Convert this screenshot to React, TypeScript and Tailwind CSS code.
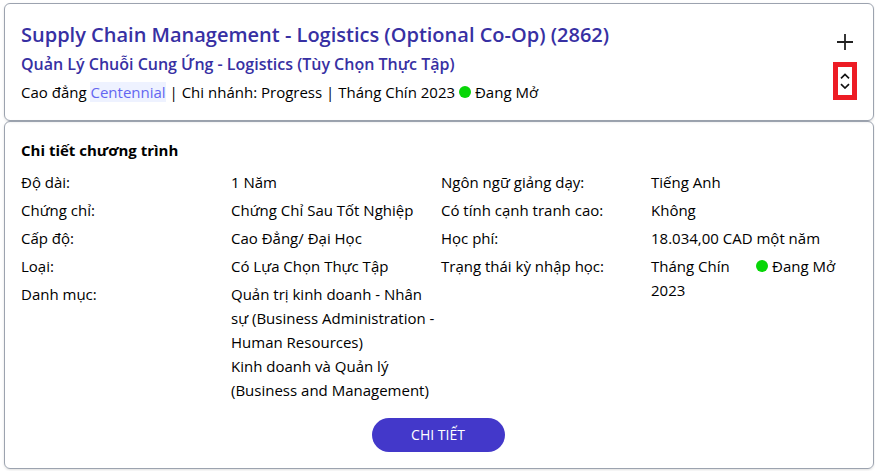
const leftDetails = [
  { label: 'Độ dài:', lines: ['1 Năm'] },
  { label: 'Chứng chỉ:', lines: ['Chứng Chỉ Sau Tốt Nghiệp'] },
  { label: 'Cấp độ:', lines: ['Cao Đẳng/ Đại Học'] },
  { label: 'Loại:', lines: ['Có Lựa Chọn Thực Tập'] },
  {
    label: 'Danh mục:',
    lines: [
      'Quản trị kinh doanh - Nhân sự (Business Administration - Human Resources)',
      'Kinh doanh và Quản lý (Business and Management)',
    ],
  },
];

const rightDetails = [
  { label: 'Ngôn ngữ giảng dạy:', value: 'Tiếng Anh' },
  { label: 'Có tính cạnh tranh cao:', value: 'Không' },
  { label: 'Học phí:', value: '18.034,00 CAD một năm' },
];

const OpenStatus = () => (
  <span className="inline-flex items-center gap-1 whitespace-nowrap">
    <span className="h-3 w-3 rounded-full bg-[#07d607]" />
    Đang Mở
  </span>
);

const PlusIcon = () => (
  <svg className="h-4 w-4" viewBox="0 0 16 16" fill="none" stroke="#222" strokeWidth="1.8" aria-hidden="true">
    <path d="M8 0v16M0 8h16" />
  </svg>
);

const UpDownIcon = () => (
  <svg className="h-4 w-3" viewBox="0 0 12 16" fill="none" stroke="#111" strokeWidth="1.7" aria-hidden="true">
    <path d="M2 5.3l4-3.8 4 3.8M2 11.2l4 3.8 4-3.8" />
  </svg>
);

const App = () => {
  return (
    <main className="bg-white pt-[3px] pr-px pb-0.5 pl-1 font-['Open_Sans','Noto_Sans',sans-serif] text-[15px] leading-6 text-black">
      <section className="flex justify-between rounded-md border border-[#9ca3af] pt-4 pr-4 pb-3.5 pl-4 shadow">
        <div>
          <h1 className="text-xl leading-[30px] font-semibold text-[#3730a3]">
            Supply Chain Management - Logistics (Optional Co-Op) (2862)
          </h1>
          <h2 className="text-base leading-7 font-semibold text-[#3730a3]">
            Quản Lý Chuỗi Cung Ứng - Logistics (Tùy Chọn Thực Tập)
          </h2>
          <p className="leading-7">
            Cao đẳng <a href="#centennial" className="bg-[#eef2ff] text-[#6366f1]">Centennial</a> | Chi nhánh: Progress | Tháng Chín 2023{' '}
            <OpenStatus />
          </p>
        </div>
        <div className="flex flex-col items-center gap-3 pt-3.5">
          <button type="button" aria-label="Thêm chương trình"><PlusIcon /></button>
          <button type="button" aria-label="Thu gọn" className="flex h-[38px] w-6 items-center justify-center border-5 border-[#ed1c24]">
            <UpDownIcon />
          </button>
        </div>
      </section>

      <section className="rounded-md border border-[#9ca3af] p-4 pr-3 shadow">
        <h3 className="mb-2 font-bold">Chi tiết chương trình</h3>
        <div className="grid grid-cols-2">
          <dl className="space-y-1">
            {leftDetails.map((item) => (
              <div key={item.label} className="grid grid-cols-2">
                <dt>{item.label}</dt>
                <dd>{item.lines.map((line) => <p key={line}>{line}</p>)}</dd>
              </div>
            ))}
          </dl>
          <dl className="space-y-1">
            {rightDetails.map((item) => (
              <div key={item.label} className="grid grid-cols-2">
                <dt>{item.label}</dt>
                <dd>{item.value}</dd>
              </div>
            ))}
            <div className="grid grid-cols-2">
              <dt>Trạng thái kỳ nhập học:</dt>
              <dd className="grid grid-cols-2 items-start">
                <span>Tháng Chín 2023</span>
                <OpenStatus />
              </dd>
            </div>
          </dl>
        </div>
        <div className="mt-4 flex justify-center pr-1.5">
          <button type="button" className="h-[34px] w-[133px] rounded-full bg-[#4338ca] text-sm text-white">
            CHI TIẾT
          </button>
        </div>
      </section>
    </main>
  );
};

export default App;
